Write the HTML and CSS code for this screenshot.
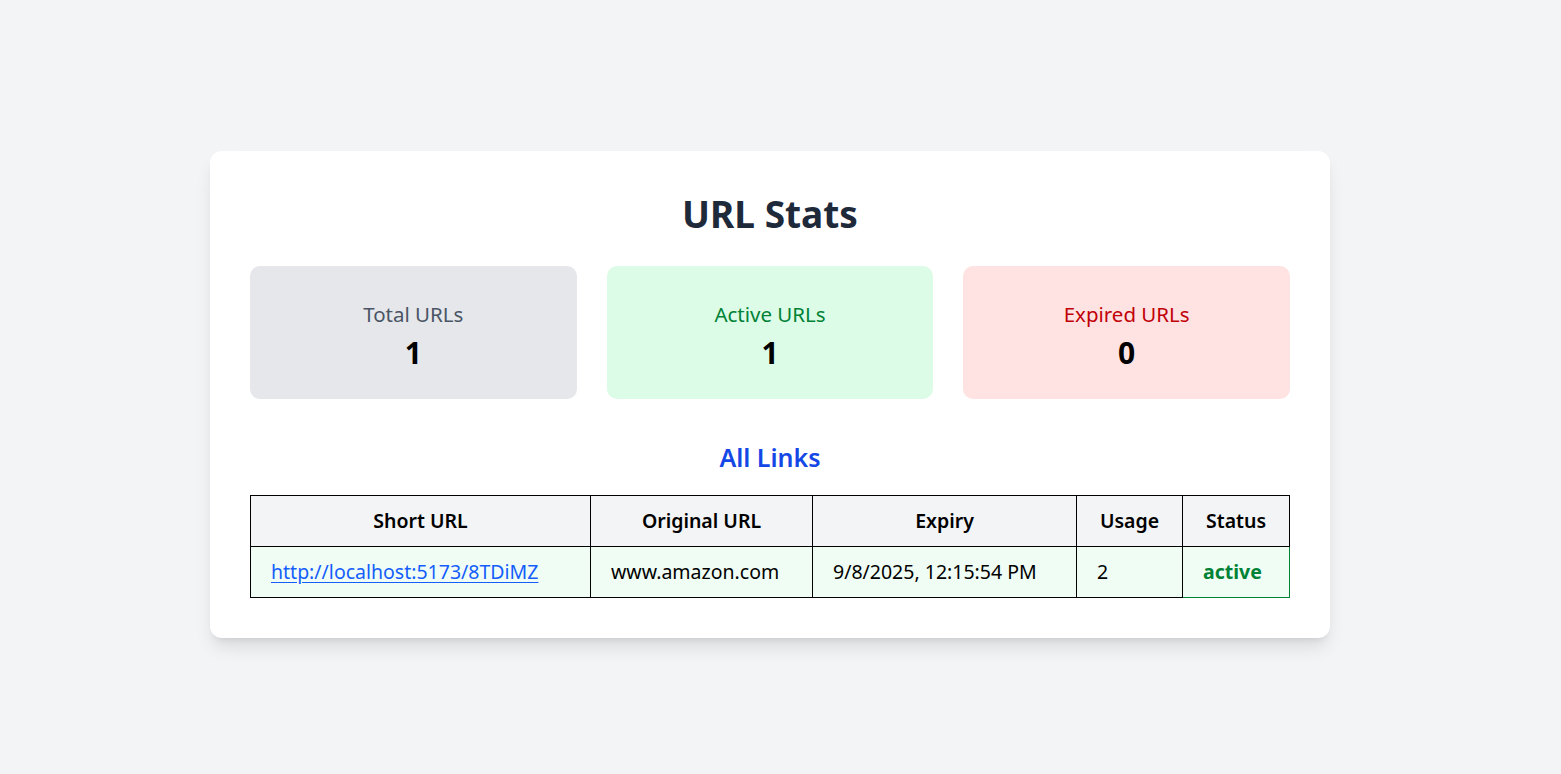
FILE: index.html
```html
<!DOCTYPE html>
<html lang="en">
<head>
<meta charset="utf-8">
<title>URL Stats</title>
<link rel="stylesheet" href="styles.css">
</head>
<body>
<div class="page">
  <main class="card">
    <h1 class="title">URL Stats</h1>
    <section class="stats">
      <div class="stat stat-total">
        <p class="stat-label">Total URLs</p>
        <p class="stat-value">1</p>
      </div>
      <div class="stat stat-active">
        <p class="stat-label">Active URLs</p>
        <p class="stat-value">1</p>
      </div>
      <div class="stat stat-expired">
        <p class="stat-label">Expired URLs</p>
        <p class="stat-value">0</p>
      </div>
    </section>
    <h2 class="subtitle">All Links</h2>
    <table class="links">
      <colgroup>
        <col class="c1"><col class="c2"><col class="c3"><col class="c4"><col class="c5">
      </colgroup>
      <thead>
        <tr>
          <th>Short URL</th>
          <th>Original URL</th>
          <th>Expiry</th>
          <th>Usage</th>
          <th>Status</th>
        </tr>
      </thead>
      <tbody>
        <tr class="row-active">
          <td><a class="short-link" href="#">http://localhost:5173/8TDiMZ</a></td>
          <td>www.amazon.com</td>
          <td>9/8/2025, 12:15:54 PM</td>
          <td>2</td>
          <td class="status-active">active</td>
        </tr>
      </tbody>
    </table>
  </main>
</div>
</body>
</html>
```

FILE: styles.css
```css
* { box-sizing: border-box; }
html, body { margin: 0; padding: 0; }
body {
  background: #f3f4f6;
  font-family: "Noto Sans", "Open Sans", sans-serif;
  color: #000;
  min-height: 774px;
}
.page {
  padding: 151px 0 0 210px;
}
.card {
  width: 1120px;
  background: #fff;
  border-radius: 12px;
  padding: 40px;
  box-shadow: 0 12px 18px -3px rgba(0,0,0,0.1), 0 5px 7px -4px rgba(0,0,0,0.1);
}
.title {
  margin: 0 0 30px;
  text-align: center;
  font-size: 37px;
  line-height: 45px;
  font-weight: 700;
  color: #1e2939;
}
.stats {
  display: grid;
  grid-template-columns: repeat(3, 1fr);
  gap: 30px;
}
.stat {
  border-radius: 10px;
  padding: 33px 30px 26px;
  text-align: center;
  height: 133px;
}
.stat p { margin: 0; }
.stat-label {
  font-size: 20.5px;
  line-height: 30px;
}
.stat-value {
  margin-top: 4px !important;
  font-size: 30px;
  line-height: 40px;
  font-weight: 700;
  color: #000;
}
.stat-total { background: #e5e7eb; }
.stat-total .stat-label { color: #4a5565; }
.stat-active { background: #dcfce7; }
.stat-active .stat-label { color: #008236; }
.stat-expired { background: #ffe2e2; }
.stat-expired .stat-label { color: #c10007; }
.subtitle {
  margin: 39px 0 20px;
  padding-top: 2px;
  text-align: center;
  font-size: 25px;
  line-height: 35px;
  font-weight: 600;
  color: #1447e6;
}
.links {
  width: 100%;
  border-collapse: collapse;
  table-layout: fixed;
  font-size: 19.5px;
  line-height: 30px;
}
.c1 { width: 340px; }
.c2 { width: 222px; }
.c3 { width: 264px; }
.c4 { width: 106px; }
.c5 { width: 107px; }
.links th, .links td {
  border: 1px solid #000;
  padding: 10px 20px;
  white-space: nowrap;
}
.links th {
  background: #f3f4f6;
  font-weight: 600;
  text-align: center;
}
.links td {
  text-align: left;
  font-weight: 400;
}
.row-active { background: #f0fdf4; }
.short-link {
  color: #155dfc;
  text-decoration: underline;
  text-underline-offset: 3px;
}
.links td.status-active {
  color: #008236;
  border-color: #008236;
  font-weight: 700;
}
```
